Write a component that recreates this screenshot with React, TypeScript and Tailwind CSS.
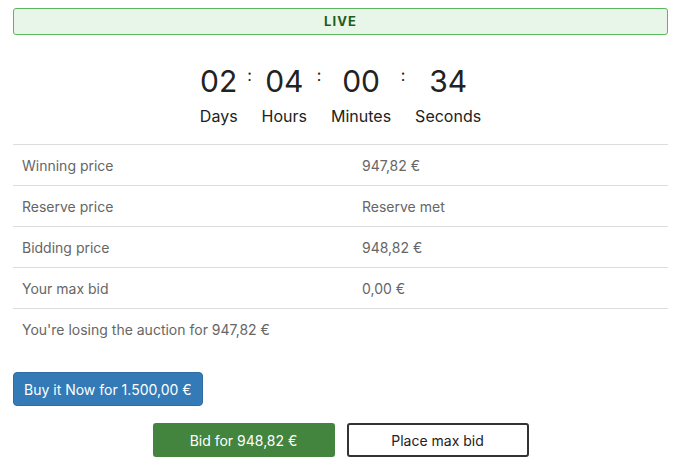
import React from "react";

const units = [
  { v: "02", l: "Days" },
  { v: "04", l: "Hours" },
  { v: "00", l: "Minutes" },
  { v: "34", l: "Seconds" },
];

const rows = [
  ["Winning price", "947,82 €"],
  ["Reserve price", "Reserve met"],
  ["Bidding price", "948,82 €"],
  ["Your max bid", "0,00 €"],
];

export default function App() {
  return (
    <div
      className="w-[681px] h-[466px] bg-white px-[13px] pt-2"
      style={{ fontFamily: "Inter, 'Noto Sans', sans-serif" }}
    >
      <div className="h-[27px] flex items-center justify-center border border-[#5cb85c] bg-[#e8f5e9] rounded-[3px] text-[13px] font-bold tracking-[0.08em] text-[#1b5e20]">
        LIVE
      </div>

      <div className="flex justify-center mt-[28px] text-[#222]">
        {units.map((u, i) => (
          <React.Fragment key={u.l}>
            {i > 0 && (
              <div className="w-[24px] text-center text-[16px] leading-[20px] pt-[2px]">:</div>
            )}
            <div className="flex flex-col items-center">
              <div className="text-[30px] leading-[36px]">{u.v}</div>
              <div className="text-[16px] leading-[24px] mt-[5px]">{u.l}</div>
            </div>
          </React.Fragment>
        ))}
      </div>

      <div className="mt-[16px] border-t border-[#dddddd] text-[14px] text-[#666]">
        {rows.map(([a, b]) => (
          <div key={a} className="flex h-[41px] items-center border-b border-[#dddddd]">
            <div className="w-[349px] pl-[9px]">{a}</div>
            <div>{b}</div>
          </div>
        ))}
        <div className="flex h-[41px] items-center pl-[9px]">You're losing the auction for 947,82 €</div>
      </div>

      <div className="mt-[22px]">
        <button className="h-[34px] px-[10px] bg-[#337ab7] text-white text-[14px] rounded-[4px] border border-[#2e6da4]">
          Buy it Now for 1.500,00 €
        </button>
      </div>

      <div className="flex justify-center gap-[12px] mt-[17px]">
        <button className="w-[182px] h-[34px] bg-[#43843f] text-white text-[14px] rounded-[3px]">
          Bid for 948,82 €
        </button>
        <button className="w-[182px] h-[34px] bg-white text-[#222] text-[14px] rounded-[3px] border-2 border-[#333]">
          Place max bid
        </button>
      </div>
    </div>
  );
}
